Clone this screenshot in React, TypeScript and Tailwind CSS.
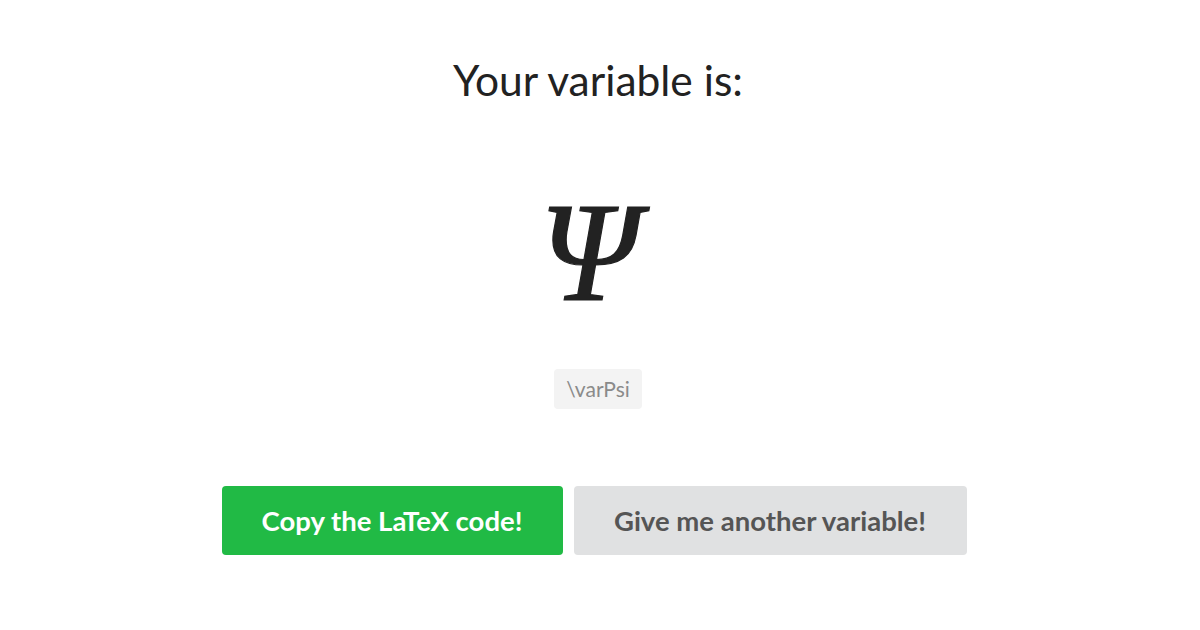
export default function App() {
  return (
    <div className="w-[1200px] h-[630px] bg-white flex flex-col items-center" style={{ fontFamily: "Lato, 'Noto Sans', sans-serif" }}>
      <h1 className="mt-[52px] mr-[4px] text-[42.5px] leading-[56px] text-[#222222] font-normal">Your variable is:</h1>
      <div className="mt-[84px] h-[120px] pr-[22px] flex items-center justify-center text-[142px] leading-none italic text-[#222222] [-webkit-text-stroke:1.2px_#222222]" style={{ fontFamily: "'Liberation Serif', serif" }}>
        Ψ
      </div>
      <div className="mt-[57px] mr-[4px] h-[40px] px-[12px] flex items-center rounded-[4px] bg-[#f3f3f3] text-[21px] text-[#8a8a8a]">\varPsi</div>
      <div className="mt-[77px] mr-[12px] flex gap-[11px]">
        <button className="w-[341px] h-[69px] rounded-[4px] bg-[#21ba45] text-white text-[27.5px] font-bold">Copy the LaTeX code!</button>
        <button className="w-[393px] h-[69px] rounded-[4px] bg-[#e0e1e2] text-[#555555] text-[27.5px] font-bold">Give me another variable!</button>
      </div>
    </div>
  );
}
